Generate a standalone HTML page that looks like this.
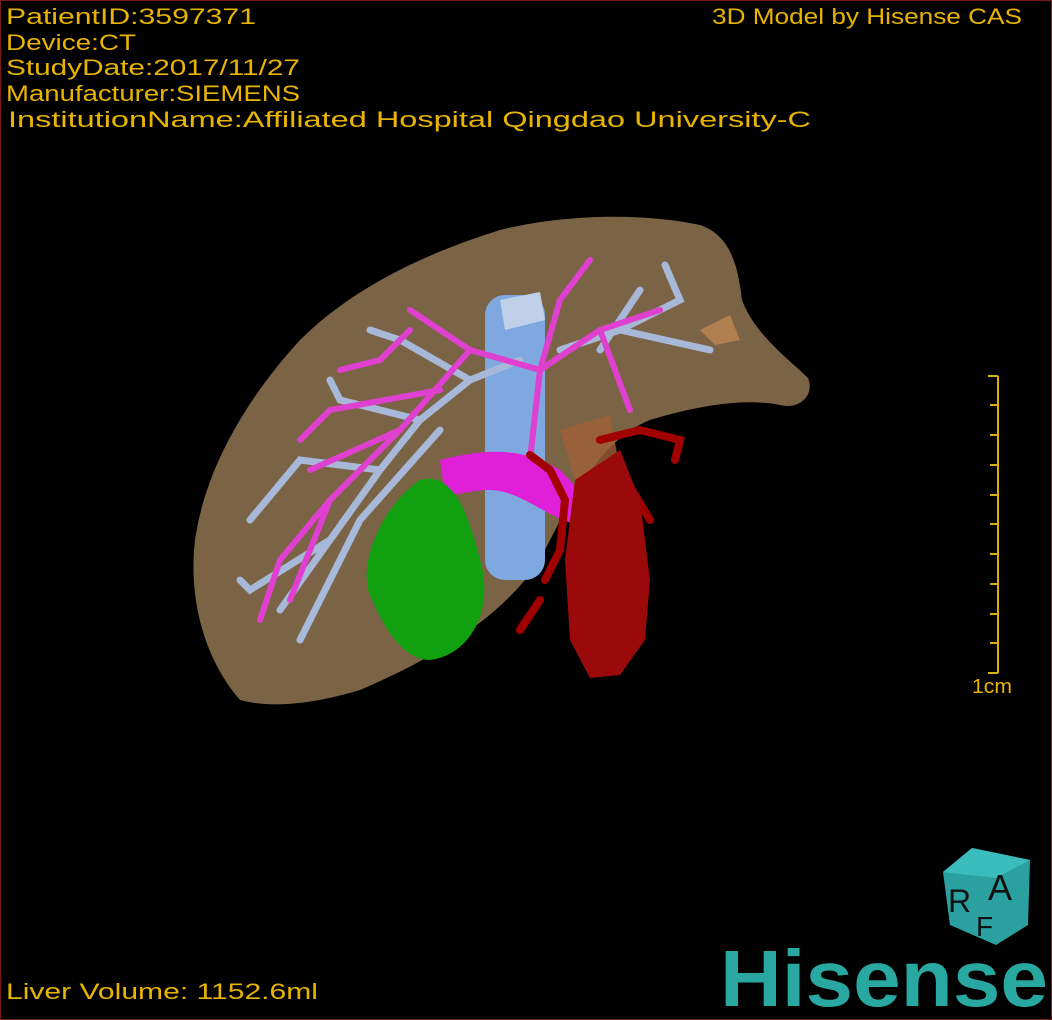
<!DOCTYPE html>
<html><head><meta charset="utf-8"><style>
html,body{margin:0;padding:0;background:#000;}
#w{position:relative;width:1050px;height:1018px;border:1px solid #7a1a1a;background:#000;overflow:hidden;}
svg{position:absolute;left:-1px;top:-1px}
.t{font-family:"Liberation Sans",sans-serif;font-size:22px;fill:#e8b400}
</style></head><body><div id="w">
<svg width="1052" height="1020" viewBox="0 0 1052 1020">
<path d="M240,700 C205,660 188,600 195,540 C205,470 245,400 300,340 C350,290 420,255 500,230 C560,215 640,212 700,225 C730,235 738,265 742,300 C755,335 790,360 808,378 C815,395 800,410 780,405 C745,398 700,405 650,420 C600,440 570,500 540,560 C500,620 430,660 360,690 C310,705 270,708 240,700Z" fill="#7b6345"/>
<path d="M700,330 L730,315 L740,340 L715,345Z" fill="#b08050"/>
<path d="M560,430 L610,415 L620,470 L575,480Z" fill="#a0603a" opacity="0.8"/>
<rect x="485" y="295" width="60" height="285" rx="20" fill="#7fa8e0"/>
<path d="M500,300 L540,292 L545,320 L505,330Z" fill="#c0d0e8"/>
<g stroke="#a8b8d8" stroke-width="7" fill="none" stroke-linecap="round">
<path d="M520,360 L470,380 L420,420 L380,470 L330,540 L280,610"/>
<path d="M470,380 L400,340 L370,330"/><path d="M420,420 L340,400 L330,380"/>
<path d="M380,470 L300,460 L250,520"/><path d="M330,540 L250,590 L240,580"/>
<path d="M560,350 L620,330 L680,300 L665,265"/><path d="M620,330 L710,350"/>
<path d="M440,430 L360,520 L300,640"/><path d="M600,350 L640,290"/>
</g>
<g stroke="#e040d0" stroke-width="6" fill="none" stroke-linecap="round">
<path d="M530,460 L540,370 L560,300 L590,260"/><path d="M540,370 L470,350 L410,310"/>
<path d="M540,370 L600,330 L660,310"/><path d="M470,350 L400,430 L330,500 L280,560 L260,620"/>
<path d="M440,390 L330,410 L300,440"/><path d="M400,430 L310,470"/><path d="M330,500 L290,600"/>
<path d="M600,330 L630,410"/><path d="M410,330 L380,360 L340,370"/>
</g>
<path d="M440,460 C480,450 520,445 560,470 C580,490 595,510 580,525 C550,520 520,490 490,490 C470,490 460,495 445,495Z" fill="#e020d8"/>
<path d="M420,480 C455,470 470,520 480,560 C495,610 470,655 430,660 C400,660 380,620 368,590 C360,550 390,500 420,480Z" fill="#10a010"/>
<g stroke="#a00000" stroke-width="8" fill="none" stroke-linecap="round">
<path d="M530,455 L550,470 L565,500 L560,550 L545,580"/><path d="M600,440 L640,430 L680,440 L675,460"/>
<path d="M620,470 L650,520"/><path d="M540,600 L520,630"/>
</g>
<path d="M575,480 L620,450 L640,500 L650,580 L645,640 L620,675 L590,678 L570,640 L565,560Z" fill="#9a0a0a"/>
<g stroke="#d8b000" stroke-width="2" fill="none">
<path d="M998,376 V673 M988,376 H998 M988,673 H998"/>
<path d="M990,405H998M990,435H998M990,465H998M990,495H998M990,524H998M990,554H998M990,584H998M990,614H998M990,643H998"/>
</g>
<path d="M943,872 L972,848 L1030,860 L1028,925 L996,945 L950,925Z" fill="#2aa0a0"/>
<path d="M972,848 L1030,860 L996,878 L943,872Z" fill="#3bbcbc"/>
<text x="948" y="912" font-size="32" fill="#111" font-family="Liberation Sans">R</text>
<text x="988" y="900" font-size="36" fill="#111" font-family="Liberation Sans">A</text>
<text x="976" y="936" font-size="28" fill="#111" font-family="Liberation Sans">F</text>
<text x="720" y="1006" font-size="80" font-weight="bold" fill="#28a8a0" font-family="Liberation Sans" textLength="328" lengthAdjust="spacingAndGlyphs">Hisense</text>
<g lengthAdjust="spacingAndGlyphs">
<text class="t" x="6" y="24" textLength="250" lengthAdjust="spacingAndGlyphs">PatientID:3597371</text>
<text class="t" x="6" y="50" textLength="130" lengthAdjust="spacingAndGlyphs">Device:CT</text>
<text class="t" x="6" y="75" textLength="294" lengthAdjust="spacingAndGlyphs">StudyDate:2017/11/27</text>
<text class="t" x="6" y="101" textLength="294" lengthAdjust="spacingAndGlyphs">Manufacturer:SIEMENS</text>
<text class="t" x="8" y="127" textLength="803" lengthAdjust="spacingAndGlyphs">InstitutionName:Affiliated Hospital Qingdao University-C</text>
<text class="t" x="712" y="24" textLength="310" lengthAdjust="spacingAndGlyphs">3D Model by Hisense CAS</text>
<text class="t" x="972" y="693" textLength="40" lengthAdjust="spacingAndGlyphs" style="font-size:20px">1cm</text>
<text class="t" x="6" y="999" textLength="312" lengthAdjust="spacingAndGlyphs">Liver Volume: 1152.6ml</text>
</g>
</svg>
</div></body></html>
